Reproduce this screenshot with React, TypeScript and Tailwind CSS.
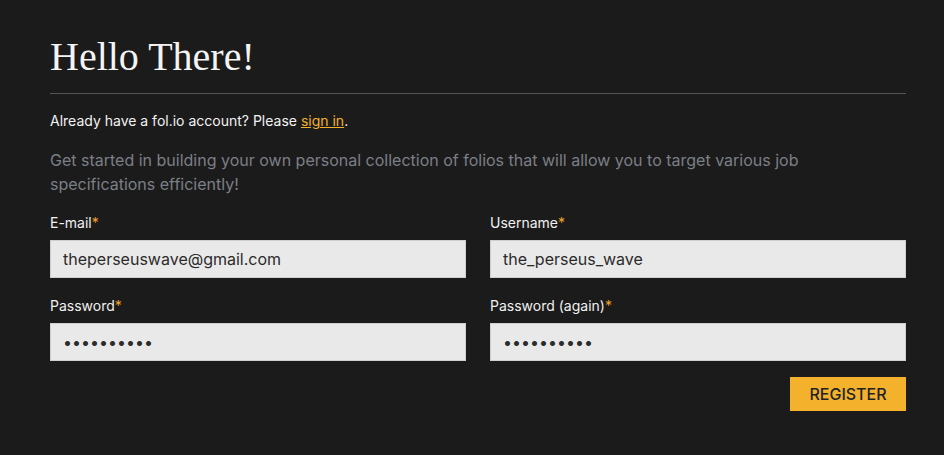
const fields = [
  { label: 'E-mail', type: 'text', value: 'theperseuswave@gmail.com' },
  { label: 'Username', type: 'text', value: 'the_perseus_wave' },
  { label: 'Password', type: 'password', value: 'abcdefghij' },
  { label: 'Password (again)', type: 'password', value: 'abcdefghij' },
]

export default function App() {
  return (
    <div className="min-h-screen bg-[#1b1b1b] pl-[50px] pr-[38px] pt-[33px] font-['Inter','Liberation_Sans',sans-serif] text-[#f2f2f2]">
      {/* Header */}
      <div className="border-b border-[#555555] pb-[12px]">
        <h1 className="font-['Liberation_Serif',serif] text-[40px] leading-[48px] text-[#f4f4f4]">
          Hello There!
        </h1>
      </div>

      <p className="mt-[17px] text-sm leading-5">
        Already have a fol.io account? Please{' '}
        <a href="#" className="text-[#f2b12b] underline">sign in</a>.
      </p>

      <p className="mt-[17px] text-base leading-6 text-[#7b7f86]">
        Get started in building your own personal collection of folios that will allow you to target various job
        specifications efficiently!
      </p>

      {/* Form */}
      <form className="mt-[17px]">
        <div className="grid grid-cols-2 gap-x-6 gap-y-[18px]">
          {fields.map((f) => (
            <label key={f.label} className="flex flex-col">
              <span className="text-sm leading-5 text-[#f0f0f0]">
                {f.label}
                <span className="text-[#f0a52a]">*</span>
              </span>
              <input
                type={f.type}
                defaultValue={f.value}
                className="mt-[7px] h-[38px] w-full border border-[#cfcfcf] bg-[#e9e9e9] px-3 text-base text-[#2b2b2b] outline-none"
              />
            </label>
          ))}
        </div>
        <div className="mt-4 flex justify-end">
          <button
            type="button"
            className="h-[34px] w-[116px] bg-[#f3b12c] text-base font-medium text-[#222222]"
          >
            REGISTER
          </button>
        </div>
      </form>
    </div>
  )
}
